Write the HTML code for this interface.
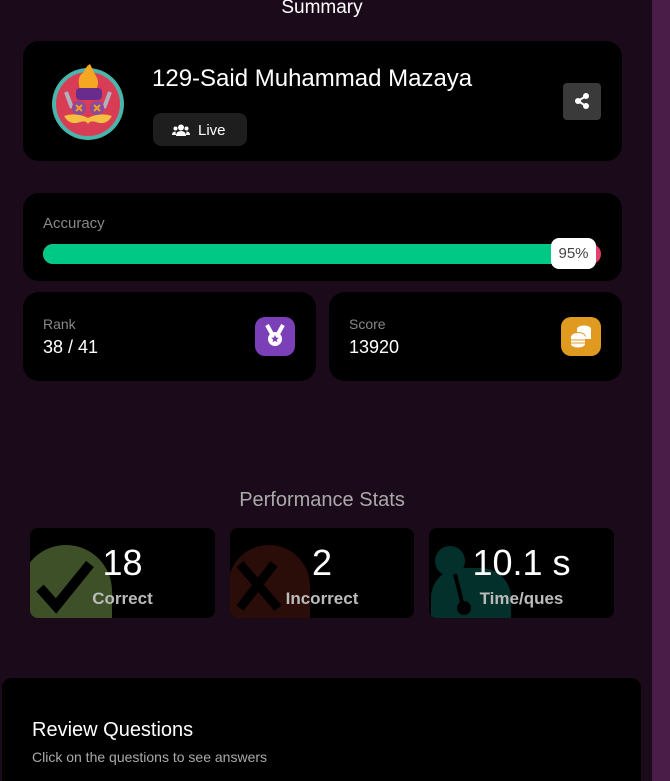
<!DOCTYPE html>
<html><head><style>
*{margin:0;padding:0;box-sizing:border-box}
html,body{width:670px;height:781px;overflow:hidden}
body{background:#1a0a1a;font-family:"Liberation Sans",sans-serif;color:#fff;position:relative}
.strip{position:absolute;left:652px;top:0;width:18px;height:781px;background:#4a1c48}
.card{position:absolute;background:#000;border-radius:16px}
.t{position:absolute;white-space:nowrap}
</style></head><body>
<div class="strip"></div>
<div class="t" style="left:0;width:644px;text-align:center;top:-3px;font-size:19px">Summary</div>

<div class="card" style="left:23px;top:41px;width:599px;height:120px"></div>
<svg style="position:absolute;left:50px;top:62px" width="78" height="80" viewBox="0 0 78 80">
<circle cx="38" cy="42" r="36" fill="#4ab5aa"/><circle cx="38" cy="42" r="32" fill="#d83d55"/>
<path d="M30 28 Q26 14 34 10 Q36 4 40 2 Q44 10 46 14 Q50 20 46 28Z" fill="#f5a623"/>
<rect x="26" y="26" width="26" height="12" rx="4" fill="#6a2c8c"/>
<path d="M16 30 L22 46 M60 30 L54 46" stroke="#b0b0c0" stroke-width="4"/>
<circle cx="29" cy="46" r="7" fill="#8a4aa0"/><circle cx="47" cy="46" r="7" fill="#8a4aa0"/>
<path d="M26 43l6 6M32 43l-6 6M44 43l6 6M50 43l-6 6" stroke="#f0a020" stroke-width="2"/>
<path d="M14 54 Q26 50 38 56 Q50 50 62 54 Q56 64 46 60 Q40 58 38 62 Q36 58 30 60 Q20 64 14 54Z" fill="#f5c040"/>
</svg>
<div class="t" style="left:152px;top:65px;font-size:24px">129-Said Muhammad Mazaya</div>
<div style="position:absolute;left:153px;top:113px;width:94px;height:33px;background:#1e1e1e;border-radius:8px"></div>
<svg style="position:absolute;left:172px;top:124px" width="18" height="12" viewBox="0 0 18 12"><circle cx="9" cy="3.5" r="3" fill="#fff"/><circle cx="3.5" cy="4.5" r="2" fill="#fff"/><circle cx="14.5" cy="4.5" r="2" fill="#fff"/><path d="M4 12 Q4 7 9 7 Q14 7 14 12Z M0 11 Q0 7.5 3.5 7.5 L4 11Z M18 11 Q18 7.5 14.5 7.5 L14 11Z" fill="#fff"/></svg>
<div class="t" style="left:198px;top:122px;font-size:15px">Live</div>
<div style="position:absolute;left:563px;top:83px;width:38px;height:37px;background:#3a3a3a;border-radius:4px"></div>
<svg style="position:absolute;left:573px;top:92px" width="18" height="18" viewBox="0 0 18 18"><path d="M13 4 L5 9 L13 14" stroke="#fff" stroke-width="2" fill="none"/><circle cx="13" cy="4" r="3" fill="#fff"/><circle cx="5" cy="9" r="3" fill="#fff"/><circle cx="13" cy="14" r="3" fill="#fff"/></svg>

<div class="card" style="left:23px;top:193px;width:599px;height:88px"></div>
<div class="t" style="left:43px;top:215px;font-size:15px;color:#888">Accuracy</div>
<div style="position:absolute;left:43px;top:244px;width:558px;height:20px;border-radius:10px;background:#e53f6a"></div>
<div style="position:absolute;left:43px;top:244px;width:520px;height:20px;border-radius:10px 0 0 10px;background:#00c985"></div>
<div style="position:absolute;left:551px;top:238px;width:45px;height:31px;border-radius:8px;background:#fff;color:#444;font-size:15px;text-align:center;line-height:31px">95%</div>

<div class="card" style="left:23px;top:292px;width:293px;height:89px"></div>
<div class="t" style="left:43px;top:316px;font-size:14px;color:#888">Rank</div>
<div class="t" style="left:43px;top:337px;font-size:18px">38 / 41</div>
<div style="position:absolute;left:255px;top:317px;width:40px;height:39px;border-radius:10px;background:#7b3fb8"></div>
<svg style="position:absolute;left:264px;top:324px" width="22" height="24" viewBox="0 0 22 24"><path d="M3 1 L8 10 M19 1 L14 10" stroke="#fff" stroke-width="4"/><circle cx="11" cy="15" r="7" fill="#fff"/><path d="M11 11 l1.2 2.6 2.6.3-2 1.8.6 2.6-2.4-1.4-2.4 1.4.6-2.6-2-1.8 2.6-.3z" fill="#7b3fb8"/></svg>

<div class="card" style="left:329px;top:292px;width:293px;height:89px"></div>
<div class="t" style="left:349px;top:316px;font-size:14px;color:#888">Score</div>
<div class="t" style="left:349px;top:337px;font-size:18px">13920</div>
<div style="position:absolute;left:561px;top:317px;width:40px;height:39px;border-radius:10px;background:#e09a20"></div>
<svg style="position:absolute;left:568px;top:324px" width="26" height="24" viewBox="0 0 26 24"><ellipse cx="16" cy="5" rx="7" ry="3.5" fill="#fff"/><rect x="9" y="5" width="14" height="10" fill="#fff"/><ellipse cx="10" cy="12" rx="7" ry="3.5" fill="#fff" stroke="#e09a20"/><rect x="3" y="12" width="14" height="8" fill="#fff"/><ellipse cx="10" cy="20" rx="7" ry="3.5" fill="#fff"/><path d="M3 16h14M3 19h14" stroke="#e09a20"/></svg>

<div class="t" style="left:0;width:644px;text-align:center;top:489px;font-size:20px;color:#aaa">Performance Stats</div>

<div style="position:absolute;left:30px;top:528px;width:185px;height:90px;background:#000;border-radius:8px;overflow:hidden">
 <div style="position:absolute;left:-10px;top:17px;width:92px;height:100px;border-radius:46px 46px 0 0;background:#3d5028"></div>
 <svg style="position:absolute;left:6px;top:30px" width="60" height="56" viewBox="0 0 60 56"><path d="M4 30 L20 48 L54 6" stroke="#000" stroke-width="10" fill="none"/></svg>
 <div class="t" style="left:0;width:185px;text-align:center;top:14px;font-size:36px">18</div>
 <div class="t" style="left:0;width:185px;text-align:center;top:61px;font-size:17px;font-weight:bold;color:#bbb">Correct</div>
</div>
<div style="position:absolute;left:230px;top:528px;width:184px;height:90px;background:#000;border-radius:8px;overflow:hidden">
 <div style="position:absolute;left:-2px;top:17px;width:82px;height:100px;border-radius:41px 41px 0 0;background:#2a0c08"></div>
 <svg style="position:absolute;left:4px;top:30px" width="50" height="55" viewBox="0 0 50 55"><path d="M6 6 L44 50 M40 6 L6 50" stroke="#000" stroke-width="9"/></svg>
 <div class="t" style="left:0;width:184px;text-align:center;top:14px;font-size:36px">2</div>
 <div class="t" style="left:0;width:184px;text-align:center;top:61px;font-size:17px;font-weight:bold;color:#bbb">Incorrect</div>
</div>
<div style="position:absolute;left:429px;top:528px;width:185px;height:90px;background:#000;border-radius:8px;overflow:hidden">
 <div style="position:absolute;left:2px;top:40px;width:80px;height:60px;border-radius:30px 30px 0 0;background:#04302c"></div>
 <div style="position:absolute;left:6px;top:18px;width:30px;height:30px;border-radius:15px;background:#04302c"></div>
 <svg style="position:absolute;left:20px;top:44px" width="30" height="46" viewBox="0 0 30 46"><path d="M6 2 L14 34" stroke="#000" stroke-width="4"/><circle cx="15" cy="36" r="7" fill="#000"/></svg>
 <div class="t" style="left:0;width:185px;text-align:center;top:14px;font-size:36px">10.1 s</div>
 <div class="t" style="left:0;width:185px;text-align:center;top:61px;font-size:17px;font-weight:bold;color:#bbb">Time/ques</div>
</div>

<div style="position:absolute;left:2px;top:678px;width:639px;height:103px;background:#000;border-radius:10px 10px 0 0"></div>
<div class="t" style="left:32px;top:719px;font-size:20px">Review Questions</div>
<div class="t" style="left:32px;top:749px;font-size:14px;color:#aaa">Click on the questions to see answers</div>
</body></html>
